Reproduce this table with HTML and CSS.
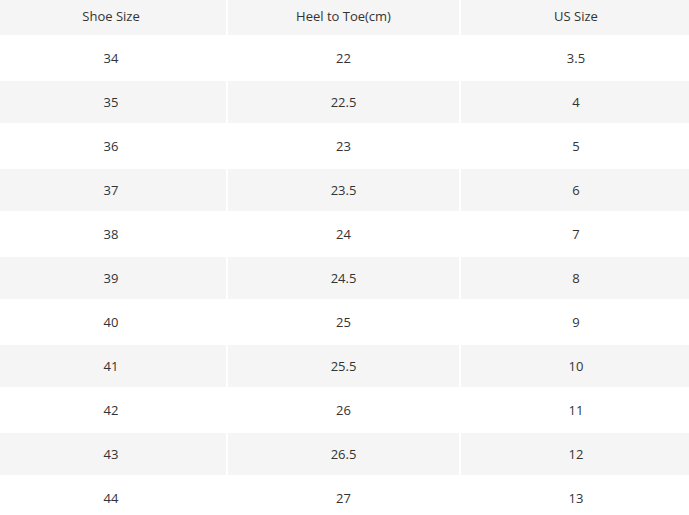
FILE: index.html
```html
<!DOCTYPE html>
<html>
<head>
<meta charset="utf-8">
<link rel="stylesheet" href="styles.css">
</head>
<body>
<table class="size-table">
  <colgroup>
    <col class="c1"><col class="c2"><col class="c3">
  </colgroup>
  <thead>
    <tr class="head"><th>Shoe Size</th><th>Heel to Toe(cm)</th><th>US Size</th></tr>
  </thead>
  <tbody>
    <tr><td>34</td><td>22</td><td>3.5</td></tr>
    <tr class="alt"><td>35</td><td>22.5</td><td>4</td></tr>
    <tr><td>36</td><td>23</td><td>5</td></tr>
    <tr class="alt"><td>37</td><td>23.5</td><td>6</td></tr>
    <tr><td>38</td><td>24</td><td>7</td></tr>
    <tr class="alt"><td>39</td><td>24.5</td><td>8</td></tr>
    <tr><td>40</td><td>25</td><td>9</td></tr>
    <tr class="alt"><td>41</td><td>25.5</td><td>10</td></tr>
    <tr><td>42</td><td>26</td><td>11</td></tr>
    <tr class="alt"><td>43</td><td>26.5</td><td>12</td></tr>
    <tr><td>44</td><td>27</td><td>13</td></tr>
  </tbody>
</table>
</body>
</html>
```
FILE: styles.css
```css
html, body {
  margin: 0;
  padding: 0;
  background: #ffffff;
  overflow: hidden;
}
.size-table {
  margin: -6px 0 0 -6px;
  width: 699px;
  table-layout: fixed;
  border-collapse: separate;
  border-spacing: 2px;
  font-family: "Open Sans", "Noto Sans", sans-serif;
  font-size: 13px;
  color: #333333;
}
.c1 { width: 230px; }
.c2 { width: 231px; }
.c3 { width: 230px; }
.size-table th,
.size-table td {
  padding: 0;
  text-align: center;
  font-weight: normal;
  vertical-align: middle;
}
.head th {
  height: 39px;
  background: #f5f5f5;
}
.size-table td {
  height: 42px;
  background: #ffffff;
}
.size-table .alt td {
  background: #f5f5f5;
}
```
